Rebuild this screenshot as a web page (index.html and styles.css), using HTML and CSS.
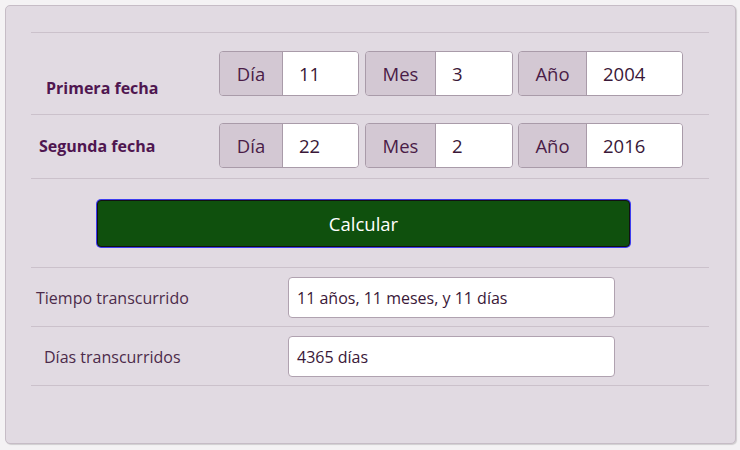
FILE: index.html
```html
<!DOCTYPE html>
<html lang="es">
<head>
  <meta charset="UTF-8" />
  <title>Calcular tiempo entre fechas</title>
  <link rel="stylesheet" href="styles.css">
</head>
<body>
  <div class="card">
    <div class="inner">

      <div class="row row-first">
        <div class="label">Primera fecha</div>
        <div class="groups">
          <div class="group g-day"><span class="addon">Día</span><span class="field">11</span></div>
          <div class="group g-month"><span class="addon">Mes</span><span class="field">3</span></div>
          <div class="group g-year"><span class="addon">Año</span><span class="field">2004</span></div>
        </div>
      </div>

      <div class="row row-second">
        <div class="label">Segunda fecha</div>
        <div class="groups">
          <div class="group g-day"><span class="addon">Día</span><span class="field">22</span></div>
          <div class="group g-month"><span class="addon">Mes</span><span class="field">2</span></div>
          <div class="group g-year"><span class="addon">Año</span><span class="field">2016</span></div>
        </div>
      </div>

      <div class="row row-button">
        <button class="calc">Calcular</button>
      </div>

      <div class="row result">
        <div class="result-label">Tiempo transcurrido</div>
        <div class="result-box">11 años, 11 meses, y 11 días</div>
      </div>

      <div class="row result">
        <div class="result-label days">Días transcurridos</div>
        <div class="result-box">4365 días</div>
      </div>

    </div>
  </div>
</body>
</html>
```

FILE: styles.css
```css
* { box-sizing: border-box; }

body {
  margin: 0;
  padding: 5px;
  background: #f4f2f4;
  font-family: "Open Sans", Arial, sans-serif;
  color: #4a1c47;
}

.card {
  width: 731px;
  height: 439px;
  background: #e1dae2;
  border: 1px solid #c6bcc6;
  border-radius: 5px;
  box-shadow: 1px 1px 1px rgba(0,0,0,0.15);
  padding: 26px 26px 0 25px;
}

.inner {
  border-bottom: 1px solid #cbc1cb;
}

.row {
  display: flex;
  align-items: center;
  border-top: 1px solid #cbc1cb;
}

.row-first {
  padding: 18px 0 18px;
}

.row-second {
  padding: 8px 0 10px;
}

.label {
  width: 188px;
  font-size: 16px;
  font-weight: bold;
  color: #4f1650;
}

.row-first .label {
  align-self: flex-end;
  line-height: 14px;
  margin-bottom: 1px;
  padding-left: 15px;
}

.row-second .label {
  padding-left: 8px;
}

.groups {
  display: flex;
  gap: 6px;
}

.group {
  display: flex;
  height: 45px;
  border: 1px solid #a99ba9;
  border-radius: 4px;
  overflow: hidden;
  font-size: 18.5px;
}

.addon {
  display: flex;
  align-items: center;
  justify-content: center;
  background: #d3c8d3;
  border-right: 1px solid #a99ba9;
  color: #4a1c47;
}

.field {
  display: flex;
  align-items: center;
  background: #fff;
  padding-left: 16px;
  color: #3a1838;
}

.g-day .addon { width: 63px; }
.g-day .field { width: 75px; }
.g-month .addon { width: 70px; }
.g-month .field { width: 76px; }
.g-year { margin-left: -1px; }
.g-year .addon { width: 68px; }
.g-year .field { width: 95px; }

.row-button {
  padding: 21px 0 20px 66px;
}

.calc {
  width: 533px;
  height: 47px;
  background: #0f500d;
  color: #fff;
  font-family: "Open Sans", Arial, sans-serif;
  font-size: 18.5px;
  border: 1px solid #111;
  border-radius: 4px;
  box-shadow: 0 0 0 1px #3c3cf0;
  cursor: pointer;
}

.result {
  padding: 9px 0 8px;
}

.result-label {
  width: 257px;
  padding-left: 5px;
  font-size: 16px;
  color: #4c2b4a;
}

.result-label.days {
  padding-left: 13px;
}

.result-box {
  width: 327px;
  height: 41px;
  display: flex;
  align-items: center;
  padding-left: 8px;
  background: #fff;
  border: 1px solid #b0a2b0;
  border-radius: 4px;
  font-size: 16px;
  color: #3a1838;
}
```
